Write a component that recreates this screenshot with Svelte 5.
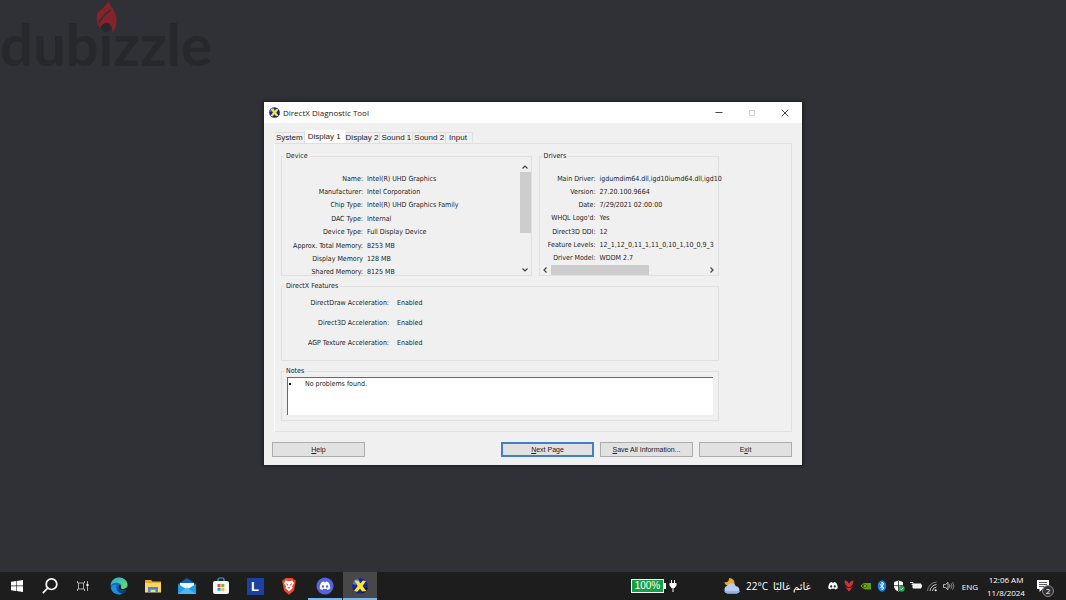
<script>
  const tabs = ['System', 'Display 1', 'Display 2', 'Sound 1', 'Sound 2', 'Input'];
  let activeTab = $state('Display 1');

  const device = [
    ['Name:', 'Intel(R) UHD Graphics'],
    ['Manufacturer:', 'Intel Corporation'],
    ['Chip Type:', 'Intel(R) UHD Graphics Family'],
    ['DAC Type:', 'Internal'],
    ['Device Type:', 'Full Display Device'],
    ['Approx. Total Memory:', '8253 MB'],
    ['Display Memory', '128 MB'],
    ['Shared Memory:', '8125 MB']
  ];

  const drivers = [
    ['Main Driver:', 'igdumdim64.dll,igd10iumd64.dll,igd10'],
    ['Version:', '27.20.100.9664'],
    ['Date:', '7/29/2021 02:00:00'],
    ["WHQL Logo'd:", 'Yes'],
    ['Direct3D DDI:', '12'],
    ['Feature Levels:', '12_1,12_0,11_1,11_0,10_1,10_0,9_3'],
    ['Driver Model:', 'WDDM 2.7']
  ];

  const features = [
    ['DirectDraw Acceleration:', 'Enabled'],
    ['Direct3D Acceleration:', 'Enabled'],
    ['AGP Texture Acceleration:', 'Enabled']
  ];
</script>

{#snippet dxIcon(size)}
  <svg width={size} height={size} viewBox="0 0 16 16" aria-hidden="true">
    <circle cx="8" cy="8" r="7.800" fill="#1c219c" />
    <path d="M.5 6A7.800 7.800 0 0 1 6 .5L8 4 4 7z" fill="#5870dc" />
    <path d="M10 15.500A7.800 7.800 0 0 0 15.500 10L11 9z" fill="#0a0c3c" />
    <path d="M2.500 2.500 6.300 2.700 8.300 5.200 11 2.500l3 .6L10.600 8l3.700 5-4 .4L8 10.700 5.200 13.800l-3.200-.8L5.700 8z" fill="#f5ea22" />
  </svg>
{/snippet}

{#snippet discordFace()}
  <path d="M4.700 5c1-.7 2-.9 2.300-.9l.3.600h1.400l.3-.600c.4 0 1.400.2 2.300.9 1 1.600 1.500 3.300 1.400 5.300-.8.7-1.700 1-2.500 1.200l-.6-1c-1 .3-2.200.3-3.200 0l-.6 1c-.8-.2-1.700-.5-2.500-1.200C3.200 8.300 3.700 6.600 4.700 5zm1.500 2.300c-.6 0-1 .5-1 1.100s.4 1.100 1 1.100 1-.5 1-1.100-.4-1.100-1-1.100zm3.600 0c-.6 0-1 .5-1 1.100s.4 1.100 1 1.100 1-.5 1-1.100-.4-1.100-1-1.100z" fill="#fff" fill-rule="evenodd" />
{/snippet}

<div class="desktop">
  <div class="watermark">
    dubizzle
    <svg width="24" height="34" viewBox="0 0 24 34" aria-hidden="true">
      <path d="M14 1c0 3 2 5 4 8 2 4 4 8 3.500 13-.5 4-1 7-4 10-.5-3 0-6-2.500-8-3-2-8-1-10 4-3-3-4-9-3-14C4 11 9 8 14 1z" fill="#84232a" />
      <path d="M15.500 10C12 13 6 17 4 23" stroke="#3a2c31" stroke-width="1.500" fill="none" />
    </svg>
  </div>

  <main>
    <section class="window" aria-label="DirectX Diagnostic Tool">
      <header>
        {@render dxIcon(11)}
        <h1>DirectX Diagnostic Tool</h1>
        <button aria-label="Minimize">
          <svg width="8" height="8" viewBox="0 0 8 8"><path d="M.5 3.500h7" stroke="#444" /></svg>
        </button>
        <button aria-label="Maximize" disabled>
          <svg width="8" height="8" viewBox="0 0 8 8"><path d="M1.500 1.500h5v5h-5z" fill="none" stroke="#ccc" /></svg>
        </button>
        <button aria-label="Close">
          <svg width="8" height="8" viewBox="0 0 8 8"><path d="M.7.7l6.600 6.600M7.300.7.7 7.300" stroke="#444" /></svg>
        </button>
      </header>

      <div class="tabs" role="tablist">
        {#each tabs as tab}
          <button
            role="tab"
            aria-selected={activeTab === tab}
            class:active={activeTab === tab}
            onclick={() => (activeTab = tab)}>{tab}</button>
        {/each}
      </div>

      <div class="panel" role="tabpanel">
        <div class="columns">
          <fieldset class="device">
            <legend>Device</legend>
            <dl>
              {#each device as [label, value]}
                <dt>{label}</dt>
                <dd>{value}</dd>
              {/each}
            </dl>
            <div class="scroll vertical">
              <button aria-label="Scroll up"><svg width="6" height="4" viewBox="0 0 6 4"><path d="M.5 3.500 3 1l2.500 2.500" /></svg></button>
              <div class="track"><div class="thumb"></div></div>
              <button aria-label="Scroll down"><svg width="6" height="4" viewBox="0 0 6 4"><path d="M.5.500 3 3 5.500.500" /></svg></button>
            </div>
          </fieldset>

          <fieldset class="drivers">
            <legend>Drivers</legend>
            <dl>
              {#each drivers as [label, value]}
                <dt>{label}</dt>
                <dd>{value}</dd>
              {/each}
            </dl>
            <div class="scroll horizontal">
              <button aria-label="Scroll left"><svg width="4" height="6" viewBox="0 0 4 6"><path d="M3.500.5 1 3l2.500 2.500" /></svg></button>
              <div class="track"><div class="thumb"></div></div>
              <button aria-label="Scroll right"><svg width="4" height="6" viewBox="0 0 4 6"><path d="M.5.500 3 3 .5 5.500" /></svg></button>
            </div>
          </fieldset>
        </div>

        <fieldset class="features">
          <legend>DirectX Features</legend>
          <dl>
            {#each features as [label, value]}
              <dt>{label}</dt>
              <dd>{value}</dd>
            {/each}
          </dl>
        </fieldset>

        <fieldset class="notes">
          <legend>Notes</legend>
          <ul>
            <li>No problems found.</li>
          </ul>
        </fieldset>
      </div>

      <footer>
        <button class="help"><u>H</u>elp</button>
        <button class="default"><u>N</u>ext Page</button>
        <button><u>S</u>ave All Information...</button>
        <button>E<u>x</u>it</button>
      </footer>
    </section>
  </main>

  <nav class="taskbar" aria-label="Taskbar">
    <div class="system">
      <button aria-label="Start">
        <svg width="12" height="12" viewBox="0 0 12 12"><path d="M0 1.800 5 1v4.600H0zM5.600.9 12 0v5.600H5.600zM0 6.200h5V11l-5-.8zM5.600 6.200H12V12l-6.400-.9z" fill="#fff" /></svg>
      </button>
      <button aria-label="Search">
        <svg width="16" height="16" viewBox="0 0 16 16"><g fill="none" stroke="#fff" stroke-width="1.700"><circle cx="9.500" cy="6.200" r="5.300" /><path d="M5.700 10 .8 15.200" /></g></svg>
      </button>
      <button aria-label="Task view">
        <svg width="12" height="12" viewBox="0 0 12 12" fill="none" stroke="#aaa"><path d="M.5 1v2h7V1M.5 11V9h7v2M1.500 3v6M6.500 3v6M10.500 1v10" /><path d="M10.500 4v2" stroke="#fff" stroke-width="2" /></svg>
      </button>
    </div>

    <div class="apps">
      <button aria-label="Microsoft Edge">
        <svg width="18" height="18" viewBox="0 0 18 18">
          <defs>
            <linearGradient id="edgeTop" x1="0" y1="0" x2="1" y2="1"><stop offset="0" stop-color="#2faae0" /><stop offset="1" stop-color="#6be05a" /></linearGradient>
          </defs>
          <circle cx="9" cy="9" r="8.500" fill="#1268bd" />
          <path d="M.6 8.500C1 3.500 4.700.5 9 .5c5 0 8.500 3.500 8.500 7.300 0 3-2.200 4.200-4.400 4.200-2 0-2.800-.8-2-1.900C12 8.400 10 5.800 6.800 5.700 3.600 5.600 1.300 7 .6 8.500z" fill="url(#edgeTop)" />
          <path d="M6.600 8C5 11.500 7.500 17 12.500 16.800 8 18.500 2.500 16.500 1.300 12 .700 9 3.500 6.700 6.600 8z" fill="#1b8fdc" />
          <path d="M9 8.300c-1.800 2.500.5 6 4.300 5.600 1.500-.2 2.600-.8 3.400-1.400-.6 1.600-1.800 3-3.300 3.900C8.500 17 5.800 11.500 9 8.300z" fill="#0c3f87" />
          <path d="M9 8c1.200-.1 2.300.7 2 1.900-.9 1.300.3 2.100 2.100 2.100 1.800 0 3.800-.8 4.400-3 .1 1.300-.1 2.400-.5 3.300-3.200 2.700-9.400 1-8-4.300z" fill="#1c1c1c" />
        </svg>
      </button>
      <button aria-label="File Explorer">
        <svg width="16" height="14" viewBox="0 0 16 14"><path d="M0 1h6l1.500 1.500H16V13H0z" fill="#e8a92c" /><path d="M0 4h16v9.500H0z" fill="#ffd766" /><path d="M3 13.500V8h10v5.500h-2.500v-2.700h-5v2.700z" fill="#3a8fd4" /></svg>
      </button>
      <button aria-label="Mail">
        <svg width="18" height="16" viewBox="0 0 18 16"><path d="M0 6 9 0l9 6v10H0z" fill="#0d62b4" /><path d="M2 5h14v6H2z" fill="#f3f8fc" /><path d="M0 6l9 5.500L18 6v10H0z" fill="#1f9be8" /><path d="M0 16l9-6.500L18 16z" fill="#49b8f5" /></svg>
      </button>
      <button aria-label="Microsoft Store">
        <svg width="16" height="18" viewBox="0 0 16 18"><path d="M5 5V2.500C5 1.500 5.500 1 6.500 1h3c1 0 1.500.5 1.500 1.500V5" fill="none" stroke="#38a9dc" stroke-width="1.200" /><rect y="4" width="16" height="13" rx="2" fill="#f5f5f5" /><path d="M4.500 7h3v3h-3z" fill="#e8502e" /><path d="M8.300 7h3v3h-3z" fill="#76b82a" /><path d="M4.500 10.800h3v3h-3z" fill="#1f96e0" /><path d="M8.300 10.800h3v3h-3z" fill="#fbb91e" /></svg>
      </button>
      <button aria-label="L"><span class="letter">L</span></button>
      <button aria-label="Brave">
        <svg width="14" height="17" viewBox="0 0 14 17"><path d="M3.500 0h7L12 1.700l1.200.1.600 2.200-.5 1.500-1.500 7.300L7 16.800l-4.800-4L.7 5.500.2 4l.6-2.200L2 1.700z" fill="#f0482a" /><path d="M7 3.200l3.300-.6 1.700 2.600-2 3 .5 1.800L7 13.500 3.500 10 4 8.200l-2-3 1.700-2.600z" fill="#fff" /><path d="M3.500 5.200l2.300.7.200 2.200zM10.500 5.200l-2.300.7-.2 2.200zM5.500 9.500 7 9l1.500.5L7 10.700z" fill="#f0482a" /></svg>
      </button>
    </div>

    <div class="apps running">
      <button aria-label="Discord">
        <svg width="18" height="18" viewBox="0 0 16 16"><circle cx="8" cy="8" r="7.600" fill="#5463df" />{@render discordFace()}</svg>
      </button>
      <button class="current" aria-label="DirectX Diagnostic Tool">{@render dxIcon(16)}</button>
    </div>

    <div class="battery">
      <span class="charge">100%</span>
      <svg width="8" height="12" viewBox="0 0 8 12" aria-hidden="true"><path d="M2 0h1v3h2V0h1v3h1.500v2.500L5.500 8h-1v4h-1V8h-1L.5 5.500V3H2z" fill="#fff" /></svg>
    </div>

    <button class="weather">
      <svg width="18" height="18" viewBox="0 0 18 18" aria-hidden="true"><path d="M6 1c4 0 6 3 5.500 6.500L5 9C2 8 1.500 6 1.500 5 4 6 6.500 4 6 1z" fill="#eea633" /><path d="M4.500 16.500a4 4 0 0 1-.2-7.700A4.800 4.800 0 0 1 13 9.300a3.700 3.700 0 0 1 .8 7.200z" fill="#b5cdf2" /><path d="M1.200 14a4 4 0 0 0 3.300 2.500h9.300a3.600 3.600 0 0 0 3.300-2.500z" fill="#8fb2e8" /></svg>
      <span>22°C</span>
      <span lang="ar" dir="rtl">غائم غالبًا</span>
    </button>

    <div class="tray">
      <svg width="12" height="12" viewBox="2 2 12 12">{@render discordFace()}</svg>
      <svg width="12" height="12" viewBox="0 0 12 12"><path d="M1.500.5 4 1l2 2.500L8 1l2.500-.5L10 4 7.500 7h-3L2 4z" fill="#cf3038" /><path d="M2 6.500l2.500 1.500h3L10 6.500 6 11.800z" fill="#cf3038" /></svg>
      <svg width="12" height="12" viewBox="0 0 12 12"><path d="M4.500 3H11v6.500H4.500z" fill="#5e9c14" /><path d="M1 6c2-3 5-3 7.500 0C6 9 3 9 1 6z" fill="#2c4610" stroke="#76b900" /><circle cx="5" cy="6" r="1.300" fill="#76b900" /></svg>
      <svg width="12" height="12" viewBox="0 0 12 12"><ellipse cx="6" cy="6" rx="4.300" ry="5.700" fill="#1a80e5" /><path d="M3.700 4 8 8 6 10V2l2 2-4.300 4" fill="none" stroke="#fff" stroke-width=".9" /></svg>
      <svg width="12" height="12" viewBox="0 0 12 12"><path d="M5.500.5 10 2v4c0 3-2 4.500-4.500 5.500C3 10.500 1 9 1 6V2z" fill="#fff" /><path d="M5.500 1v10M1 5.700h9" stroke="#1d1d1d" stroke-width=".8" /><circle cx="8.700" cy="8.700" r="3" fill="#1fa64a" /><path d="M7.300 8.700l1 1 1.800-2" fill="none" stroke="#fff" stroke-width=".8" /></svg>
      <svg width="12" height="12" viewBox="0 0 12 12"><path d="M3 4h8v4H3z" fill="#eee" stroke="#fff" /><path d="M0 2.500h3v2H1.500M11.500 5v2" stroke="#ddd" fill="none" /></svg>
      <svg width="12" height="12" viewBox="0 0 12 12" fill="none" stroke="#ddd" stroke-width=".9"><path d="M1.500 11A9.500 9.500 0 0 1 10.500 2" stroke="#888" /><path d="M4 11a7 7 0 0 1 6.500-6.500M6.500 11a4.500 4.500 0 0 1 4-4" /><circle cx="9.700" cy="10.300" r="1" fill="#fff" stroke="none" /></svg>
      <svg width="12" height="12" viewBox="0 0 12 12" fill="none" stroke="#ddd" stroke-width=".8"><path d="M.5 4.500h2L5 2.300v7.400L2.500 7.500h-2zM6.500 4.500q1 1.500 0 3" /><path d="M8 3.300q2 2.700 0 5.400M9.600 2.200q2.800 3.800 0 7.600" stroke="#999" /></svg>
    </div>

    <span class="lang">ENG</span>
    <div class="clock">
      <time datetime="00:06">12:06 AM</time>
      <time datetime="2024-11-08">11/8/2024</time>
    </div>
    <button class="notifications" aria-label="Notifications">
      <svg width="12" height="12" viewBox="0 0 12 12"><path d="M0 0h12v9H5.500L2.500 12V9H0z" fill="#fff" /><path d="M2 2.500h8M2 4.500h8M2 6.500h5" stroke="#333" stroke-width=".8" /></svg>
      <span class="badge">2</span>
    </button>
  </nav>
</div>

<style>
  :global(body) {
    margin: 0;
    background: #303136;
  }

  .desktop {
    position: relative;
    display: flex;
    flex-direction: column;
    min-height: 100vh;
    overflow: hidden;
    font-family: 'DejaVu Sans Condensed', 'DejaVu Sans', sans-serif;
    font-size: 7px;
    color: #222;
  }

  button {
    display: flex;
    align-items: center;
    justify-content: center;
    padding: 0;
    border: 0;
    background: none;
    color: inherit;
    font: inherit;
  }

  svg {
    display: block;
    flex: none;
  }

  /* Logo over the wallpaper */
  .watermark {
    position: absolute;
    top: 8px;
    left: 0;
    color: #27282c;
    font: bold 58px/72px Lato, sans-serif;
  }

  .watermark svg {
    position: absolute;
    top: -8px;
    left: 95px;
  }

  main {
    flex: 1;
    display: flex;
    align-items: center;
    justify-content: center;
    padding-bottom: 5px;
  }

  /* Window */
  .window {
    width: 538px;
    max-width: 100%;
    background: #f0f0f0;
    box-shadow: 0 0 3px 1px #1b1c20;
  }

  header {
    display: flex;
    align-items: center;
    height: 21px;
    padding: 0 1px 0 5px;
    background: #fff;
  }

  header h1 {
    flex: 1;
    margin: 0 0 0 3px;
    font: 8px/12px 'Open Sans', sans-serif;
  }

  header button {
    width: 33px;
    height: 21px;
  }

  .tabs {
    display: flex;
    align-items: flex-end;
    height: 20px;
    margin: 0 10px;
    padding-left: 1px;
    font: 8px/10px 'Liberation Sans', Arial, sans-serif;
  }

  .tabs button {
    height: 11px;
    padding: 0 1px;
    border: solid #dfdfdf;
    border-width: 1px 1px 0 0;
  }

  .tabs button:last-child {
    padding: 0 5px 0 3px;
  }

  .tabs .active {
    height: 13px;
    padding: 0 3px;
    border-color: #fff;
    background: #fff;
  }

  .panel {
    display: flex;
    flex-direction: column;
    gap: 5px;
    margin: 0 10px;
    padding: 7px 72px 10px 6px;
    border: 1px solid #dfdfdf;
    border-left-color: #fff;
  }

  .columns {
    display: grid;
    grid-template-columns: 250fr 180fr;
    gap: 7px;
  }

  fieldset {
    box-sizing: border-box;
    min-width: 0;
    margin: 0;
    padding: 0;
    border: 1px solid #e0e0e0;
  }

  legend {
    margin-left: 2px;
    padding: 0 2px;
    line-height: 10px;
  }

  dl {
    display: grid;
    flex: 1;
    column-gap: 4px;
    align-items: center;
    min-width: 0;
    margin: 0;
    line-height: 10px;
    white-space: nowrap;
  }

  dt {
    text-align: right;
  }

  dd {
    margin: 0;
    min-width: 0;
  }

  .device {
    display: flex;
    height: 125px;
  }

  .device dl {
    grid-template-columns: 81px 1fr;
    height: 107px;
    padding-top: 11px;
  }

  .drivers {
    display: flex;
    flex-direction: column;
    height: 125px;
  }

  .drivers dl {
    flex: 0 0 93px;
    grid-template-columns: 56px 1fr;
    padding-top: 11px;
  }

  .scroll {
    display: flex;
  }

  .scroll path {
    fill: none;
    stroke: #444;
    stroke-width: 1.2;
  }

  .track {
    flex: 1;
  }

  .thumb {
    background: #cdcdcd;
  }

  .vertical {
    flex-direction: column;
    width: 11px;
  }

  .vertical button {
    height: 11px;
  }

  .vertical .thumb {
    height: 66%;
  }

  .horizontal {
    height: 10px;
  }

  .horizontal button {
    width: 11px;
  }

  .horizontal .thumb {
    width: 63%;
    height: 100%;
  }

  .features {
    height: 80px;
  }

  .features dl {
    grid-template-columns: 107px 1fr;
    grid-auto-rows: 20px;
    column-gap: 8px;
    padding-top: 2px;
  }

  .notes {
    height: 55px;
    padding: 1px 5px 5px;
  }

  .notes legend {
    margin-left: -3px;
  }

  .notes ul {
    box-sizing: border-box;
    height: 38px;
    margin: 0;
    padding: 1px 0 0 1px;
    border: solid #696969;
    border-width: 1px 0 0 1px;
    background: #fff;
    list-style: none;
    line-height: 10px;
  }

  .notes li {
    display: flex;
    align-items: center;
    gap: 14px;
  }

  .notes li::before {
    content: '';
    width: 2px;
    height: 2px;
    background: #111;
  }

  footer {
    display: flex;
    gap: 6px;
    padding: 10px 10px 8px 8px;
    font: 7px/10px 'Liberation Sans', Arial, sans-serif;
  }

  footer button {
    box-sizing: border-box;
    width: 93px;
    height: 15px;
    border: 1px solid #adadad;
    background: #e1e1e1;
    white-space: pre;
  }

  footer .help {
    margin-right: auto;
  }

  footer .default {
    border: 2px solid #3f80c8;
  }

  /* Taskbar */
  .taskbar {
    display: flex;
    align-items: center;
    height: 28px;
    background: #1d1d1d;
    color: #fff;
    font-family: 'Open Sans', sans-serif;
    font-size: 8px;
  }

  .system,
  .apps {
    display: flex;
    height: 100%;
  }

  .system button {
    width: 33px;
  }

  .apps {
    margin-left: 2px;
  }

  .system + .apps {
    margin-left: 3px;
  }

  .apps button {
    box-sizing: border-box;
    width: 34px;
  }

  .running {
    gap: 1px;
  }

  .running button {
    border: solid #76b9ed;
    border-width: 0 0 2px;
    padding-top: 2px;
  }

  .running .current {
    background: #484848;
  }

  .letter {
    width: 17px;
    background: #1c429f;
    font: bold 13px/17px 'Liberation Sans', sans-serif;
    text-align: center;
  }

  .battery {
    display: flex;
    align-items: center;
    gap: 5px;
    margin-left: auto;
  }

  .charge {
    position: relative;
    width: 31px;
    border: 1px solid #fff;
    background: #14a045;
    font: 10px/12px 'Liberation Sans', sans-serif;
    text-align: center;
  }

  .charge::after {
    content: '';
    position: absolute;
    top: 3px;
    right: -3px;
    width: 2px;
    height: 6px;
    background: #fff;
  }

  .weather {
    gap: 5px;
    margin: 0 16px 0 46px;
    font-family: 'Open Sans', 'DejaVu Sans', sans-serif;
    font-size: 10px;
  }

  .tray {
    display: flex;
    justify-content: space-between;
    width: 128px;
  }

  .lang {
    margin-left: 7px;
  }

  .clock {
    display: flex;
    flex-direction: column;
    align-items: center;
    width: 56px;
    line-height: 13px;
  }

  .notifications {
    position: relative;
    width: 32px;
    height: 28px;
    padding-right: 14px;
    box-sizing: border-box;
  }

  .badge {
    position: absolute;
    top: 13px;
    left: 8px;
    width: 10px;
    border: 1px solid #888;
    border-radius: 50%;
    background: #333;
    line-height: 10px;
  }
</style>
